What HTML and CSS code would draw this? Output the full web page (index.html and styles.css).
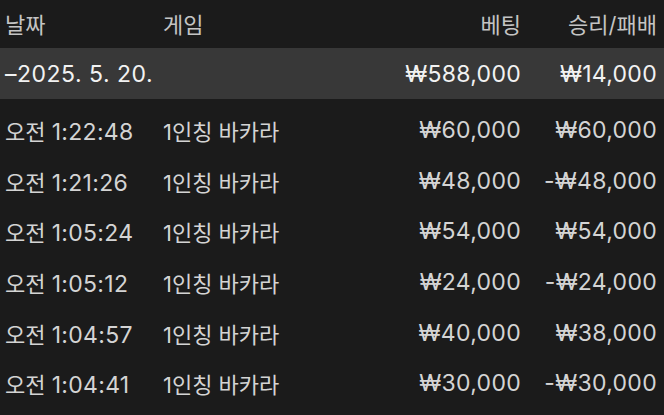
FILE: index.html
```html
<!DOCTYPE html>
<html lang="ko">
<head>
    <meta charset="UTF-8">
    <meta name="viewport" content="width=device-width, initial-scale=1.0">
    <title>베팅 내역</title>
    <link rel="stylesheet" href="styles.css">
</head>
<body>
<div class="history">
    <div class="row head">
        <span>날짜</span>
        <span>게임</span>
        <span class="right">베팅</span>
        <span class="right">승리/패배</span>
    </div>

    <div class="row group">
        <span class="latin date">–2025. 5. 20.</span>
        <span></span>
        <span class="right latin">₩588,000</span>
        <span class="right latin">₩14,000</span>
    </div>

    <div class="row">
        <span>오전 <span class="latin">1:22:48</span></span>
        <span>1인칭 바카라</span>
        <span class="right latin">₩60,000</span>
        <span class="right latin">₩60,000</span>
    </div>
    <div class="row">
        <span>오전 <span class="latin">1:21:26</span></span>
        <span>1인칭 바카라</span>
        <span class="right latin">₩48,000</span>
        <span class="right latin">-₩48,000</span>
    </div>
    <div class="row">
        <span>오전 <span class="latin">1:05:24</span></span>
        <span>1인칭 바카라</span>
        <span class="right latin">₩54,000</span>
        <span class="right latin">₩54,000</span>
    </div>
    <div class="row">
        <span>오전 <span class="latin">1:05:12</span></span>
        <span>1인칭 바카라</span>
        <span class="right latin">₩24,000</span>
        <span class="right latin">-₩24,000</span>
    </div>
    <div class="row">
        <span>오전 <span class="latin">1:04:57</span></span>
        <span>1인칭 바카라</span>
        <span class="right latin">₩40,000</span>
        <span class="right latin">₩38,000</span>
    </div>
    <div class="row">
        <span>오전 <span class="latin">1:04:41</span></span>
        <span>1인칭 바카라</span>
        <span class="right latin">₩30,000</span>
        <span class="right latin">-₩30,000</span>
    </div>
</div>
</body>
</html>
```

FILE: styles.css
```css
:root {
    --bg: #1b1b1b;
    --group-bg: #383838;
    --text: #d4d4d4;
    --head-text: #c4c4c4;
    --bright: #f2f2f2;
}

body {
    margin: 0;
    background: var(--bg);
    font-family: "Inter", "Noto Sans CJK KR", sans-serif;
    font-size: 22px;
    color: var(--text);
    overflow: hidden;
}

.history {
    display: flex;
    flex-direction: column;
}

.row {
    display: grid;
    grid-template-columns: 158px 1fr 140px 136px;
    align-items: center;
    height: 50.6px;
    padding: 0 7px 0 5px;
    white-space: nowrap;
}

.right {
    text-align: right;
}

/* digits are a touch bigger than the hangul */
.latin {
    font-size: 23px;
    letter-spacing: 0.3px;
}

.latin.date {
    letter-spacing: 0.5px;
}

/* Header */
.row.head {
    height: 46px;
    color: var(--head-text);
    padding-bottom: 2px;
}

/* Day subtotal */
.row.group {
    background: var(--group-bg);
    color: var(--bright);
    height: 51px;
    margin-bottom: 6px;
}
```
